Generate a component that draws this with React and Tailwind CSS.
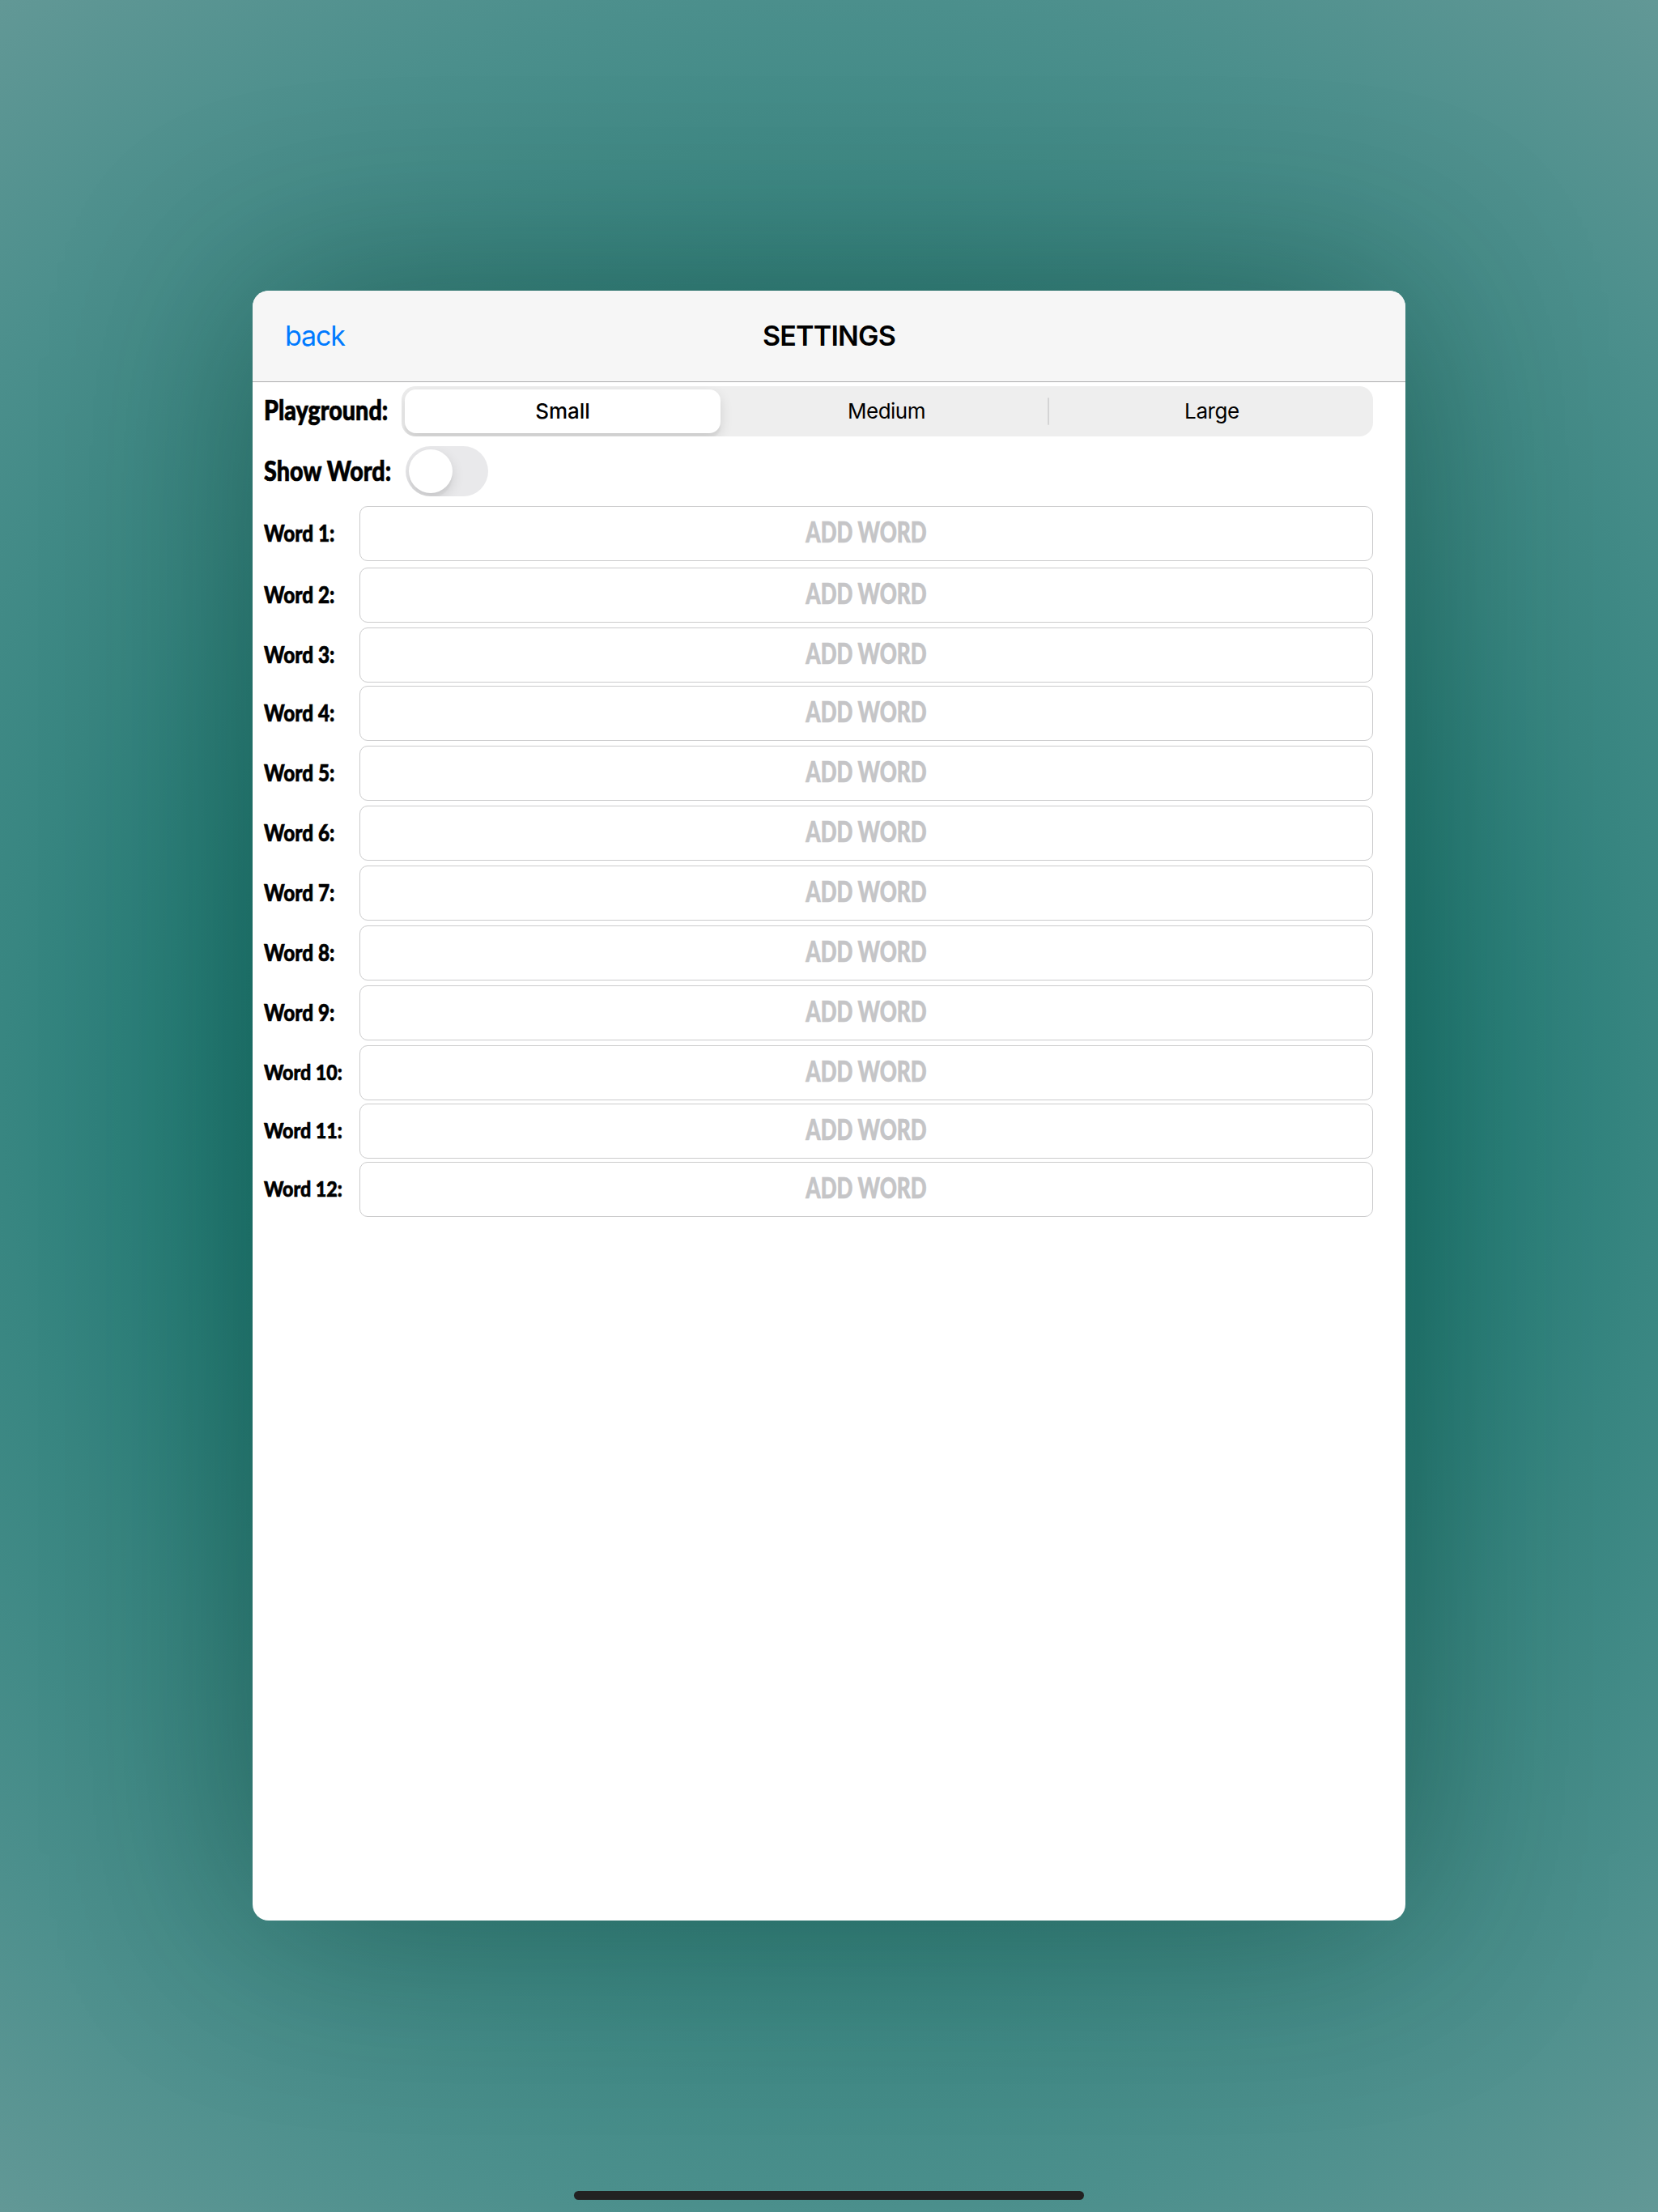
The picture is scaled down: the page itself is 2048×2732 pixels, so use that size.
const rows = [
  { n: 1, gap: "mt-0" },
  { n: 2, gap: "mt-[8px]" },
  { n: 3, gap: "mt-[6px]" },
  { n: 4, gap: "mt-[4px]" },
  { n: 5, gap: "mt-[6px]" },
  { n: 6, gap: "mt-[6px]" },
  { n: 7, gap: "mt-[6px]" },
  { n: 8, gap: "mt-[6px]" },
  { n: 9, gap: "mt-[6px]" },
  { n: 10, gap: "mt-[6px]" },
  { n: 11, gap: "mt-[4px]" },
  { n: 12, gap: "mt-[4px]" },
];

const marker =
  "font-['Marker_Felt',Lato,sans-serif] font-black whitespace-nowrap leading-none [-webkit-text-stroke:0.7px_currentColor]";

function Header() {
  return (
    <header className="grid h-[113px] shrink-0 grid-cols-3 items-center border-b border-[#adadaf] bg-[#f6f6f6] px-[40px] text-[34px] leading-none">
      <button className="justify-self-start text-left text-[#007aff] tracking-[-1.1px]">back</button>
      <h1 className="justify-self-center font-semibold tracking-[-0.8px] text-black">SETTINGS</h1>
    </header>
  );
}

function SegmentedControl() {
  return (
    <div className="flex h-[62px] w-[1200px] items-center overflow-hidden rounded-[17px] bg-[#eeeeee] p-[4px] text-[26px] leading-none text-black">
      <div className="flex h-[54px] w-[390px] items-center justify-center rounded-[14px] bg-white font-medium tracking-[-0.1px] shadow-[0_6px_16px_rgba(0,0,0,0.12),0_6px_2px_rgba(0,0,0,0.04)]">
        Small
      </div>
      <div className="flex flex-1 items-center justify-center pl-[6px] tracking-[-0.5px]">Medium</div>
      <div className="h-[34px] w-[2px] rounded-full bg-[#d4d4d5]" />
      <div className="flex w-[396px] items-center justify-center pl-[6px] tracking-[-0.4px]">Large</div>
    </div>
  );
}

function Switch() {
  return (
    <div className="h-[62px] w-[102px] overflow-hidden rounded-full bg-[#e9e9eb] p-[4px]">
      <div className="size-[54px] rounded-full bg-white shadow-[0_6px_16px_rgba(0,0,0,0.12),0_6px_2px_rgba(0,0,0,0.04)]" />
    </div>
  );
}

export default function App() {
  return (
    <div className="relative flex h-[2732px] w-[2048px] flex-col overflow-hidden bg-[radial-gradient(circle_at_center,#006a60_0px,#217c75_712px,#388681_1024px,#4b8f8c_1366px,#629896_1707px)] px-[312px] pt-[359px] font-[Inter,sans-serif]">
      <main className="flex h-[2013px] w-[1424px] flex-col rounded-[20px] bg-white shadow-[0_0_240px_rgba(0,40,28,0.38)]">
        <div className="flex flex-col overflow-hidden rounded-t-[20px]">
          <Header />
        </div>
        <div className="mt-[5px] flex h-[62px] items-center pl-[14px]">
          <span className={`${marker} w-[170px] origin-left scale-x-[0.845] pb-[4px] text-[34px]`}>Playground:</span>
          <SegmentedControl />
        </div>
        <div className="mt-[12px] flex h-[62px] items-center pl-[14px]">
          <span className={`${marker} w-[175px] origin-left scale-x-[0.845] pb-[3px] text-[34px]`}>Show Word:</span>
          <Switch />
        </div>
        <div className="mt-[12px] flex flex-col">
          {rows.map(({ n, gap }) => (
            <div key={n} className={`flex h-[68px] items-center pl-[14px] ${gap}`}>
              <span className={`${marker} w-[118px] origin-left pb-[4px] ${n > 9 ? "scale-x-[0.86] text-[27px]" : "scale-x-[0.84] text-[29px]"}`}>
                Word {n}:
              </span>
              <div className="flex h-[68px] w-[1252px] items-center justify-center rounded-[10px] border border-[#cbcbcc] bg-white pb-[6px]">
                <span className={`${marker} scale-x-[0.725] text-[36px] text-[#c5c5c7]`}>ADD WORD</span>
              </div>
            </div>
          ))}
        </div>
      </main>
      <div className="absolute bottom-[15px] left-[709px] h-[11px] w-[630px] rounded-full bg-[#222222]" />
    </div>
  );
}
